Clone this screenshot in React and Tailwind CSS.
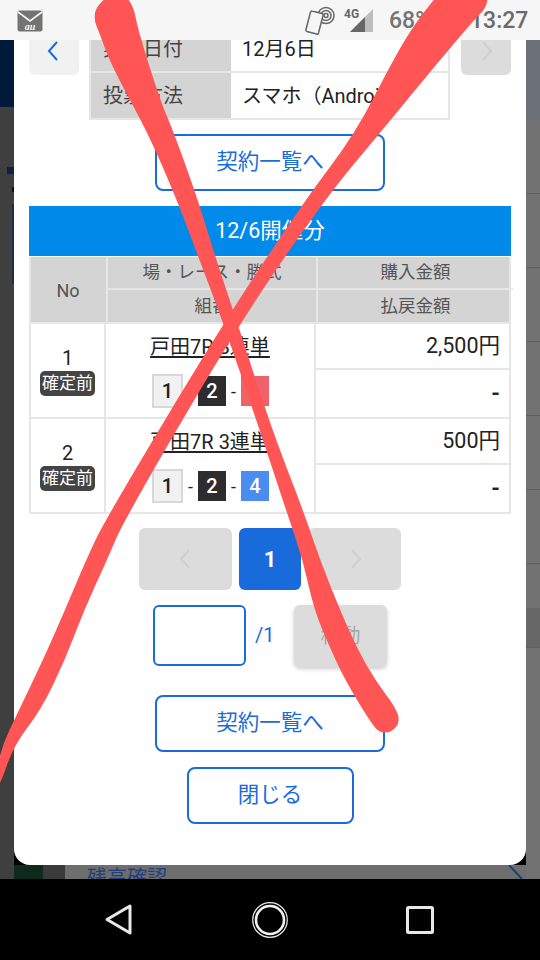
import React from "react";

const font = { fontFamily: 'Roboto, "Noto Sans CJK JP", sans-serif' };

function smooth(left, right) {
  const pts = [...left, ...right];
  let d = `M${pts[0][0]} ${pts[0][1]}`;
  for (let i = 1; i < pts.length - 1; i++) {
    const mx = (pts[i][0] + pts[i + 1][0]) / 2;
    const my = (pts[i][1] + pts[i + 1][1]) / 2;
    d += ` Q${pts[i][0]} ${pts[i][1]} ${mx} ${my}`;
  }
  const last = pts[pts.length - 1];
  return `${d} L${last[0]} ${last[1]} Z`;
}

const strokeA = smooth(
  [[108, -4], [96, 6], [94, 20], [99, 32], [112, 67], [148, 133], [177, 200], [198, 256], [224, 325], [263, 440], [286, 510], [303, 560], [314, 610], [331, 650], [345, 680], [371, 723], [380, 733], [392, 732], [400, 722], [396, 708]],
  [[375, 680], [358, 650], [340, 610], [320, 560], [303, 510], [272, 430], [238, 325], [215, 256], [198, 200], [174, 133], [160, 100], [138, 30], [134, 8], [126, -4]]
);

const strokeB = smooth(
  [[437, -4], [417, 20], [393, 60], [355, 134], [305, 200], [222, 325], [105, 520], [86, 560], [65, 610], [43, 660], [19, 710], [0, 750], [-6, 790]],
  [[0, 785], [14, 745], [41, 710], [65, 660], [84, 610], [107, 560], [124, 520], [238, 325], [324, 200], [379, 134], [440, 60], [474, 20], [486, 8], [488, -4]]
);

function Chevron({ dir = "left", color, size = 24, width = 2 }) {
  const d = dir === "left" ? "M15 3 L7 12 L15 21" : "M9 3 L17 12 L9 21";
  return (
    <svg width={size} height={size} viewBox="0 0 24 24" fill="none" stroke={color} strokeWidth={width}>
      <path d={d} />
    </svg>
  );
}

function OutlineBtn({ w, children }) {
  return (
    <div className={`${w} h-[57px] border-2 border-[#1a6bdc] rounded-[8px] flex items-center justify-center text-[21.5px] text-[#1a6bdc] bg-white`}>
      {children}
    </div>
  );
}

function Lane({ n, cls }) {
  return <span className={`flex items-center justify-center font-medium text-[20px] ${cls}`}>{n}</span>;
}

function Combo({ third }) {
  return (
    <div className="flex items-center justify-center ml-[1px] text-[18px] text-[#222]">
      <Lane n="1" cls="w-[31px] h-[34px] bg-[#f1f1f1] border-2 border-[#d8d8d8] text-[#222]" />
      <span className="w-[15px] text-center">-</span>
      <Lane n="2" cls="w-[28px] h-[30px] bg-[#2d2d2d] text-white" />
      <span className="w-[15px] text-center">-</span>
      {third}
    </div>
  );
}

function Row({ no, race, amount, third }) {
  return (
    <div className="grid grid-cols-[77px_210px_195px] h-[95px] border-b-2 border-[#e6e6e6]">
      <div className="border-x-2 border-[#e6e6e6] flex flex-col items-center justify-center">
        <span className="text-[20px] leading-[25px] text-[#222]">{no}</span>
        <span className="w-[55px] h-[25px] rounded-[5px] bg-[#444] text-white text-[17px] leading-[25px] text-center whitespace-nowrap">確定前</span>
      </div>
      <div className="border-r-2 border-[#e6e6e6] flex flex-col items-center pt-[6px] gap-[9px]">
        <span className="text-[20px] leading-[35px] text-[#222] underline underline-offset-2 whitespace-nowrap">{race}</span>
        <Combo third={third} />
      </div>
      <div className="border-r-2 border-[#e6e6e6] flex flex-col">
        <div className="h-[46px] border-b-2 border-[#e6e6e6] flex items-center justify-end pr-[9px] text-[21.5px] text-[#222]">{amount}</div>
        <div className="flex-1 flex items-center justify-end pr-[9px] text-[22px] font-bold text-[#222]">-</div>
      </div>
    </div>
  );
}

function BgLeft() {
  return (
    <div className="w-[14px] flex flex-col shrink-0">
      <div className="h-[67px] bg-[#021a3a]" />
      <div className="flex-1 bg-[#3f3f3f] flex flex-col">
        <div className="h-[60px]" />
        <div className="h-[7px] w-[7px] ml-[7px] bg-[#0d2147]" />
        <div className="h-[12px]" />
        <div className="h-[5px] w-[2px] ml-[12px] mt-[1px] bg-[#111]" />
        <div className="h-[12px]" />
        <div className="h-[80px] w-[2px] ml-[12px] bg-[#1d2c4c]" />
      </div>
    </div>
  );
}

function BgRight() {
  const lines = [0, 1, 2, 3, 4, 5];
  return (
    <div className="w-[14px] flex flex-col shrink-0 bg-[#727272]">
      <div className="h-[80px] bg-[#6b7078]" />
      {lines.map((i) => (
        <div key={i} className="h-[74px] border-b border-[#5f5f5f]" />
      ))}
      <div className="h-[40px] bg-[#676767] mt-[44px] border-b border-[#5f5f5f]" />
      <div className="flex-1" />
    </div>
  );
}

export default function App() {
  return (
    <div style={font} className="relative w-[540px] h-[960px] overflow-hidden flex flex-col bg-black">
      {/* status bar */}
      <div className="h-[40px] bg-[#f6f6f6] flex items-start shrink-0 text-[#757575]">
        <svg className="ml-[17px] mt-[10px]" width="26" height="22" viewBox="0 0 26 22">
          <rect x="0.5" y="0.5" width="25" height="21" rx="2" fill="#737373" />
          <path d="M1 2 L13 11 L25 2" fill="none" stroke="#f6f6f6" strokeWidth="1.6" />
          <text x="13" y="20" textAnchor="middle" fontSize="10" fontStyle="italic" fontWeight="700" fill="#f6f6f6" fontFamily="Liberation Serif, serif">au</text>
        </svg>
        <svg className="ml-[262px] mt-[6px]" width="30" height="30" viewBox="0 0 30 30" fill="none" stroke="#666" strokeWidth="1.5">
          <circle cx="21" cy="9.5" r="2" />
          <circle cx="21" cy="9.5" r="5" />
          <circle cx="21" cy="9.5" r="8" />
          <path d="M7 5 L17 7.5 Q18.5 8 18 9.5 L13.5 27 Q13 28.5 11.5 28 L2 25.5 Q0.7 25 1 23.5 L5.5 6 Q6 4.7 7 5 Z" fill="#f6f6f6" />
        </svg>
        <div className="relative ml-[8px] mt-[6px] w-[32px] h-[30px]">
          <svg className="absolute left-0 top-0" width="32" height="30" viewBox="0 0 32 30">
            <path d="M30 3 L30 26 L7 26 Z" fill="#bdbdbd" />
            <path d="M22 11 L22 26 L7 26 Z" fill="#666" />
          </svg>
          <span className="absolute left-[1px] top-[0px] text-[12px] font-bold leading-[16px] text-[#666]">4G</span>
        </div>
        <span className="ml-[14px] mt-[7px] text-[23px] leading-[28px] font-medium whitespace-nowrap w-[81px]">68%</span>
        <span className="mt-[7px] text-[23px] leading-[28px] font-medium whitespace-nowrap text-[#6a6a6a]">13:27</span>
      </div>

      {/* dimmed page + modal */}
      <div className="h-[839px] flex shrink-0 overflow-hidden">
        <BgLeft />
        <div className="w-[512px] shrink-0 flex flex-col">
          <div className="h-[825px] bg-white rounded-b-[16px] overflow-hidden flex flex-col items-center shrink-0">
            {/* detail header */}
            <div className="w-[482px] -mt-[13px] flex items-start shrink-0">
              <div className="w-[50px] h-[48px] bg-[#f1f1f1] rounded-[6px] flex items-center justify-center">
                <Chevron dir="left" color="#1a6bdc" size={24} width={2} />
              </div>
              <div className="w-[361px] ml-[10px] border-x-2 border-b-2 border-[#e6e6e6] text-[20px]">
                <div className="grid grid-cols-[140px_1fr] h-[46px] border-b-2 border-[#e6e6e6]">
                  <div className="bg-[#d4d4d4] text-[#444] flex items-center pl-[12px]">実施日付</div>
                  <div className="flex items-center pl-[11px] text-[#222]">12月6日</div>
                </div>
                <div className="grid grid-cols-[140px_1fr] h-[45px]">
                  <div className="bg-[#d4d4d4] text-[#444] flex items-center pl-[12px]">投票方法</div>
                  <div className="flex items-center pl-[11px] text-[#222] whitespace-nowrap">スマホ（Android）</div>
                </div>
              </div>
              <div className="w-[50px] h-[48px] ml-auto bg-[#dcdcdc] rounded-[6px] flex items-center justify-center">
                <Chevron dir="right" color="#d0d0d0" size={24} width={2} />
              </div>
            </div>

            <div className="mt-[14px] shrink-0">
              <OutlineBtn w="w-[230px]">契約一覧へ</OutlineBtn>
            </div>

            {/* contract table */}
            <div className="mt-[15px] w-[482px] shrink-0">
              <div className="h-[50px] bg-[#028aeb] text-white text-[21.5px] flex items-center justify-center">12/6開催分</div>
              <div className="grid grid-cols-[77px_210px_195px] grid-rows-[33px_33px] mt-[1px] text-[17.5px] text-[#555] bg-[#d4d4d4] border-x-2 border-b-2 border-[#e6e6e6] h-[67px]">
                <div className="row-span-2 border-r-2 border-[#e6e6e6] flex items-center justify-center text-[18px] pr-[1px]">No</div>
                <div className="border-r-2 border-b-2 border-[#e6e6e6] flex items-center justify-center whitespace-nowrap">場・レース・勝式</div>
                <div className="border-b-2 border-[#e6e6e6] flex items-center justify-center">購入金額</div>
                <div className="border-r-2 border-[#e6e6e6] flex items-center justify-center">組番</div>
                <div className="flex items-center justify-center">払戻金額</div>
              </div>
              <Row
                no="1"
                race="戸田7R 3連単"
                amount="2,500円"
                third={<Lane n="3" cls="w-[28px] h-[30px] bg-[#f0626a] text-[#f0626a]" />}
              />
              <Row
                no="2"
                race="戸田7R 3連単"
                amount="500円"
                third={<Lane n="4" cls="w-[28px] h-[30px] bg-[#4a8cf0] text-white" />}
              />
            </div>

            {/* pagination */}
            <div className="mt-[14px] flex gap-[7px] shrink-0">
              <div className="w-[93px] h-[62px] bg-[#dcdcdc] rounded-[6px] flex items-center justify-center">
                <Chevron dir="left" color="#cfcfcf" size={24} />
              </div>
              <div className="w-[62px] h-[62px] bg-[#196bdc] rounded-[6px] flex items-center justify-center text-white text-[22px] font-bold">1</div>
              <div className="w-[93px] h-[62px] bg-[#dcdcdc] rounded-[6px] flex items-center justify-center">
                <Chevron dir="right" color="#cfcfcf" size={24} />
              </div>
            </div>

            <div className="mt-[15px] w-[234px] flex items-start shrink-0">
              <div className="w-[93px] h-[61px] border-2 border-[#1a6bdc] rounded-[6px] bg-white" />
              <span className="ml-[9px] mt-[15px] w-[39px] text-[#1a6bdc] text-[20px] leading-[30px]">/1</span>
              <div className="w-[93px] h-[62px] bg-[#dcdcdc] rounded-[6px] shadow-[0_2px_4px_rgba(0,0,0,0.2)] flex items-center justify-center text-[#a8a8a8] text-[20px]">移動</div>
            </div>

            <div className="mt-[28px] shrink-0">
              <OutlineBtn w="w-[230px]">契約一覧へ</OutlineBtn>
            </div>
            <div className="mt-[15px] shrink-0">
              <OutlineBtn w="w-[167px]">閉じる</OutlineBtn>
            </div>
          </div>
          <div className="flex-1 flex bg-[#6e6e6e]">
            <div className="w-[29px] bg-[#0d2a1c]" />
            <div className="w-[22px] bg-[#3a3a3a]" />
            <div className="flex-1 relative overflow-hidden">
              <span className="absolute left-[22px] top-[0px] text-[20px] leading-[26px] text-[#1f3f78] whitespace-nowrap">残高確認</span>
              <svg className="absolute right-[2px] top-0" width="16" height="14" viewBox="0 0 16 14" fill="none" stroke="#1f3f78" strokeWidth="2">
                <path d="M1 0 L14 14" />
              </svg>
            </div>
          </div>
        </div>
        <BgRight />
      </div>

      {/* nav bar */}
      <div className="flex-1 bg-black flex items-center justify-center gap-[106px]">
        <svg width="44" height="44" viewBox="0 0 44 44" fill="none" stroke="#e8e8e8" strokeWidth="3" strokeLinejoin="round">
          <path d="M32 8 L32 35 L9 21.5 Z" />
        </svg>
        <svg width="44" height="44" viewBox="0 0 44 44" fill="none">
          <circle cx="22" cy="22" r="17.3" stroke="#e8e8e8" strokeWidth="1.2" />
          <circle cx="22" cy="22" r="14" stroke="#f2f2f2" strokeWidth="2.6" />
        </svg>
        <svg width="44" height="44" viewBox="0 0 44 44" fill="none" stroke="#e8e8e8" strokeWidth="3" strokeLinejoin="round">
          <rect x="9.5" y="9.5" width="25" height="25" rx="1" />
        </svg>
      </div>

      {/* red hand-drawn cross */}
      <svg className="absolute left-0 top-0 pointer-events-none" width="540" height="960" viewBox="0 0 540 960" fill="#ff5555">
        <path d={strokeA} />
        <path d={strokeB} />
      </svg>
    </div>
  );
}
